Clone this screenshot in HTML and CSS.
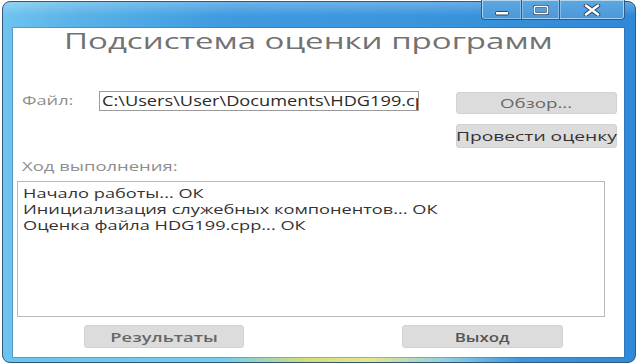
FILE: index.html
```html
<!DOCTYPE html>
<html lang="ru">
<head>
<meta charset="utf-8">
<title>Подсистема оценки программ</title>
<link rel="stylesheet" href="styles.css">
</head>
<body>
<div class="window">
  <div class="titlebar">
    <div class="caption">
      <div class="cbtn cmin"><svg width="16" height="8" viewBox="0 0 16 8"><rect x="1.5" y="3.5" width="13" height="3.5" rx="1" fill="#fff" stroke="#2b4a6a" stroke-width="1"/></svg></div>
      <div class="cbtn cmax"><svg width="16" height="10" viewBox="0 0 16 10"><rect x="1.5" y="1.5" width="13" height="7" rx="1" fill="none" stroke="#2b4a6a" stroke-width="3"/><rect x="1.5" y="1.5" width="13" height="7" rx="1" fill="none" stroke="#fff" stroke-width="1.6"/></svg></div>
      <div class="cbtn cclose"><svg width="18" height="12" viewBox="0 0 18 12"><path d="M3 1.5 L15 10.5 M15 1.5 L3 10.5" stroke="#2b4a6a" stroke-width="4.5" stroke-linecap="round"/><path d="M3 1.5 L15 10.5 M15 1.5 L3 10.5" stroke="#fff" stroke-width="2.6" stroke-linecap="round"/></svg></div>
    </div>
  </div>
  <div class="client">
    <div class="title"><span class="t t-title">Подсистема оценки программ</span></div>
    <div class="file-area">
      <div class="file-row">
        <div class="lbl lbl-file"><span class="t t-file">Файл:</span></div>
        <div class="path"><span class="t t-path">C:\Users\User\Documents\HDG199.cpp</span></div>
      </div>
      <div class="side-btns">
        <div class="btn btn-browse"><span class="t t-browse">Обзор...</span></div>
        <div class="btn btn-eval"><span class="t t-eval">Провести оценку</span></div>
      </div>
    </div>
    <div class="lbl lbl-progress"><span class="t t-progress">Ход выполнения:</span></div>
    <div class="log">
      <div class="line"><span class="t t-l1">Начало работы... ОК</span></div>
      <div class="line"><span class="t t-l2">Инициализация служебных компонентов... ОК</span></div>
      <div class="line"><span class="t t-l3">Оценка файла HDG199.cpp... ОК</span></div>
    </div>
    <div class="bottom">
      <div class="btn btn-res"><span class="t t-res">Результаты</span></div>
      <div class="btn btn-exit"><span class="t t-exit">Выход</span></div>
    </div>
  </div>
</div>
</body>
</html>
```
FILE: styles.css
```css
html, body {
  margin: 0;
  padding: 0;
  background: #ffffff;
}
body {
  width: 637px;
  height: 364px;
  overflow: hidden;
  font-family: "Open Sans", "Noto Sans", sans-serif;
}
.window {
  box-sizing: border-box;
  width: 634px;
  height: 362px;
  margin: 1px 1px 1px 2px;
  padding: 0 11px 5px 10px;
  border-radius: 8px;
  border: 1px solid #35577a;
  display: flex;
  flex-direction: column;
  background:
    linear-gradient(to right, #66c6ee 0%, #73cdee 35%, #d2de78 48%, #e6e58c 58%, #8fd0e0 70%, #3b98e0 82%, #2f8ad8 100%) left bottom / 100% 6px no-repeat,
    linear-gradient(to bottom, rgba(255,255,255,0.25) 0px, rgba(255,255,255,0) 14px) left top / 100% 30px no-repeat,
    linear-gradient(to right, #6ec3ee 0%, #58b2e8 12%, #3f9be0 35%, #3a95dd 65%, #2f89d8 100%);
}
.titlebar {
  height: 26px;
  display: flex;
  justify-content: flex-end;
  flex: none;
}
.caption {
  display: flex;
  height: 19px;
  margin-top: -2px;
  margin-right: -1px;
  border: 1px solid #2f5b86;
  border-top: none;
  border-radius: 0 0 4px 4px;
  overflow: hidden;
  background: linear-gradient(to bottom, #5ea7e0, #4a98da);
  box-shadow: inset 0 0 0 1px rgba(255,255,255,0.35);
}
.cbtn {
  display: flex;
  align-items: center;
  justify-content: center;
  height: 100%;
  border-right: 1px solid #2f5b86;
  box-shadow: inset 0 0 0 1px rgba(255,255,255,0.3);
}
.cbtn:last-child { border-right: none; }
.cmin { width: 39px; padding-top: 2px; }
.cmax { width: 37px; }
.cclose { width: 64px; }
.client {
  flex: 1;
  background: #ffffff;
  display: flex;
  flex-direction: column;
  box-shadow: 0 0 0 1px rgba(40,90,140,0.35);
}
.t {
  display: inline-block;
  white-space: nowrap;
  transform-origin: left center;
}
.title {
  height: 24px;
  line-height: 24px;
  padding-left: 51px;
  font-size: 22px;
  color: #727272;
}
.t-title { transform: scaleX(1.5); }
.file-area {
  margin-top: 39px;
  display: flex;
  height: 57px;
}
.file-row {
  display: flex;
  align-items: flex-start;
}
.lbl {
  color: #8e8e8e;
  font-size: 13px;
  line-height: 16px;
}
.lbl-file {
  width: 77px;
  padding-left: 9px;
  padding-top: 1px;
}
.t-file { transform: scaleX(1.4); }
.path {
  box-sizing: border-box;
  width: 320px;
  height: 20px;
  border: 1px solid #9a9a9a;
  overflow: hidden;
  font-size: 14px;
  line-height: 18px;
  color: #2a2a2a;
  padding-left: 2px;
}
.t-path { transform: scaleX(1.3); }
.side-btns {
  margin-left: 37px;
  width: 161px;
  display: flex;
  flex-direction: column;
}
.btn {
  box-sizing: border-box;
  display: flex;
  align-items: center;
  justify-content: center;
  background: #dcdcdc;
  border: 1px solid #d2d2d2;
  border-radius: 3px;
  font-size: 13px;
  color: #666;
}
.btn .t { transform-origin: center center; }
.btn-browse { height: 22px; margin-top: 1px; }
.t-browse { transform: scaleX(1.44); }
.btn-eval { height: 24px; margin-top: 10px; color: #333; }
.t-eval { transform: scaleX(1.48); }
.lbl-progress {
  margin-top: 10px;
  padding-left: 9px;
}
.t-progress { transform: scaleX(1.42); }
.log {
  box-sizing: border-box;
  margin-top: 7px;
  margin-left: 4px;
  width: 588px;
  height: 136px;
  border: 1px solid #b8b8b8;
  padding: 3px 5px 2px;
  font-size: 13px;
  line-height: 16px;
  color: #333;
}
.t-l1, .t-l2, .t-l3 { transform: scaleX(1.4); }
.bottom {
  margin-top: 8px;
  display: flex;
}
.btn-res {
  margin-left: 71px;
  width: 160px;
  height: 23px;
  font-weight: 600;
  color: #666;
}
.t-res { transform: scaleX(1.41); }
.btn-exit {
  margin-left: 158px;
  width: 161px;
  height: 23px;
  font-weight: 600;
  color: #555;
}
.t-exit { transform: scaleX(1.3); }
```
